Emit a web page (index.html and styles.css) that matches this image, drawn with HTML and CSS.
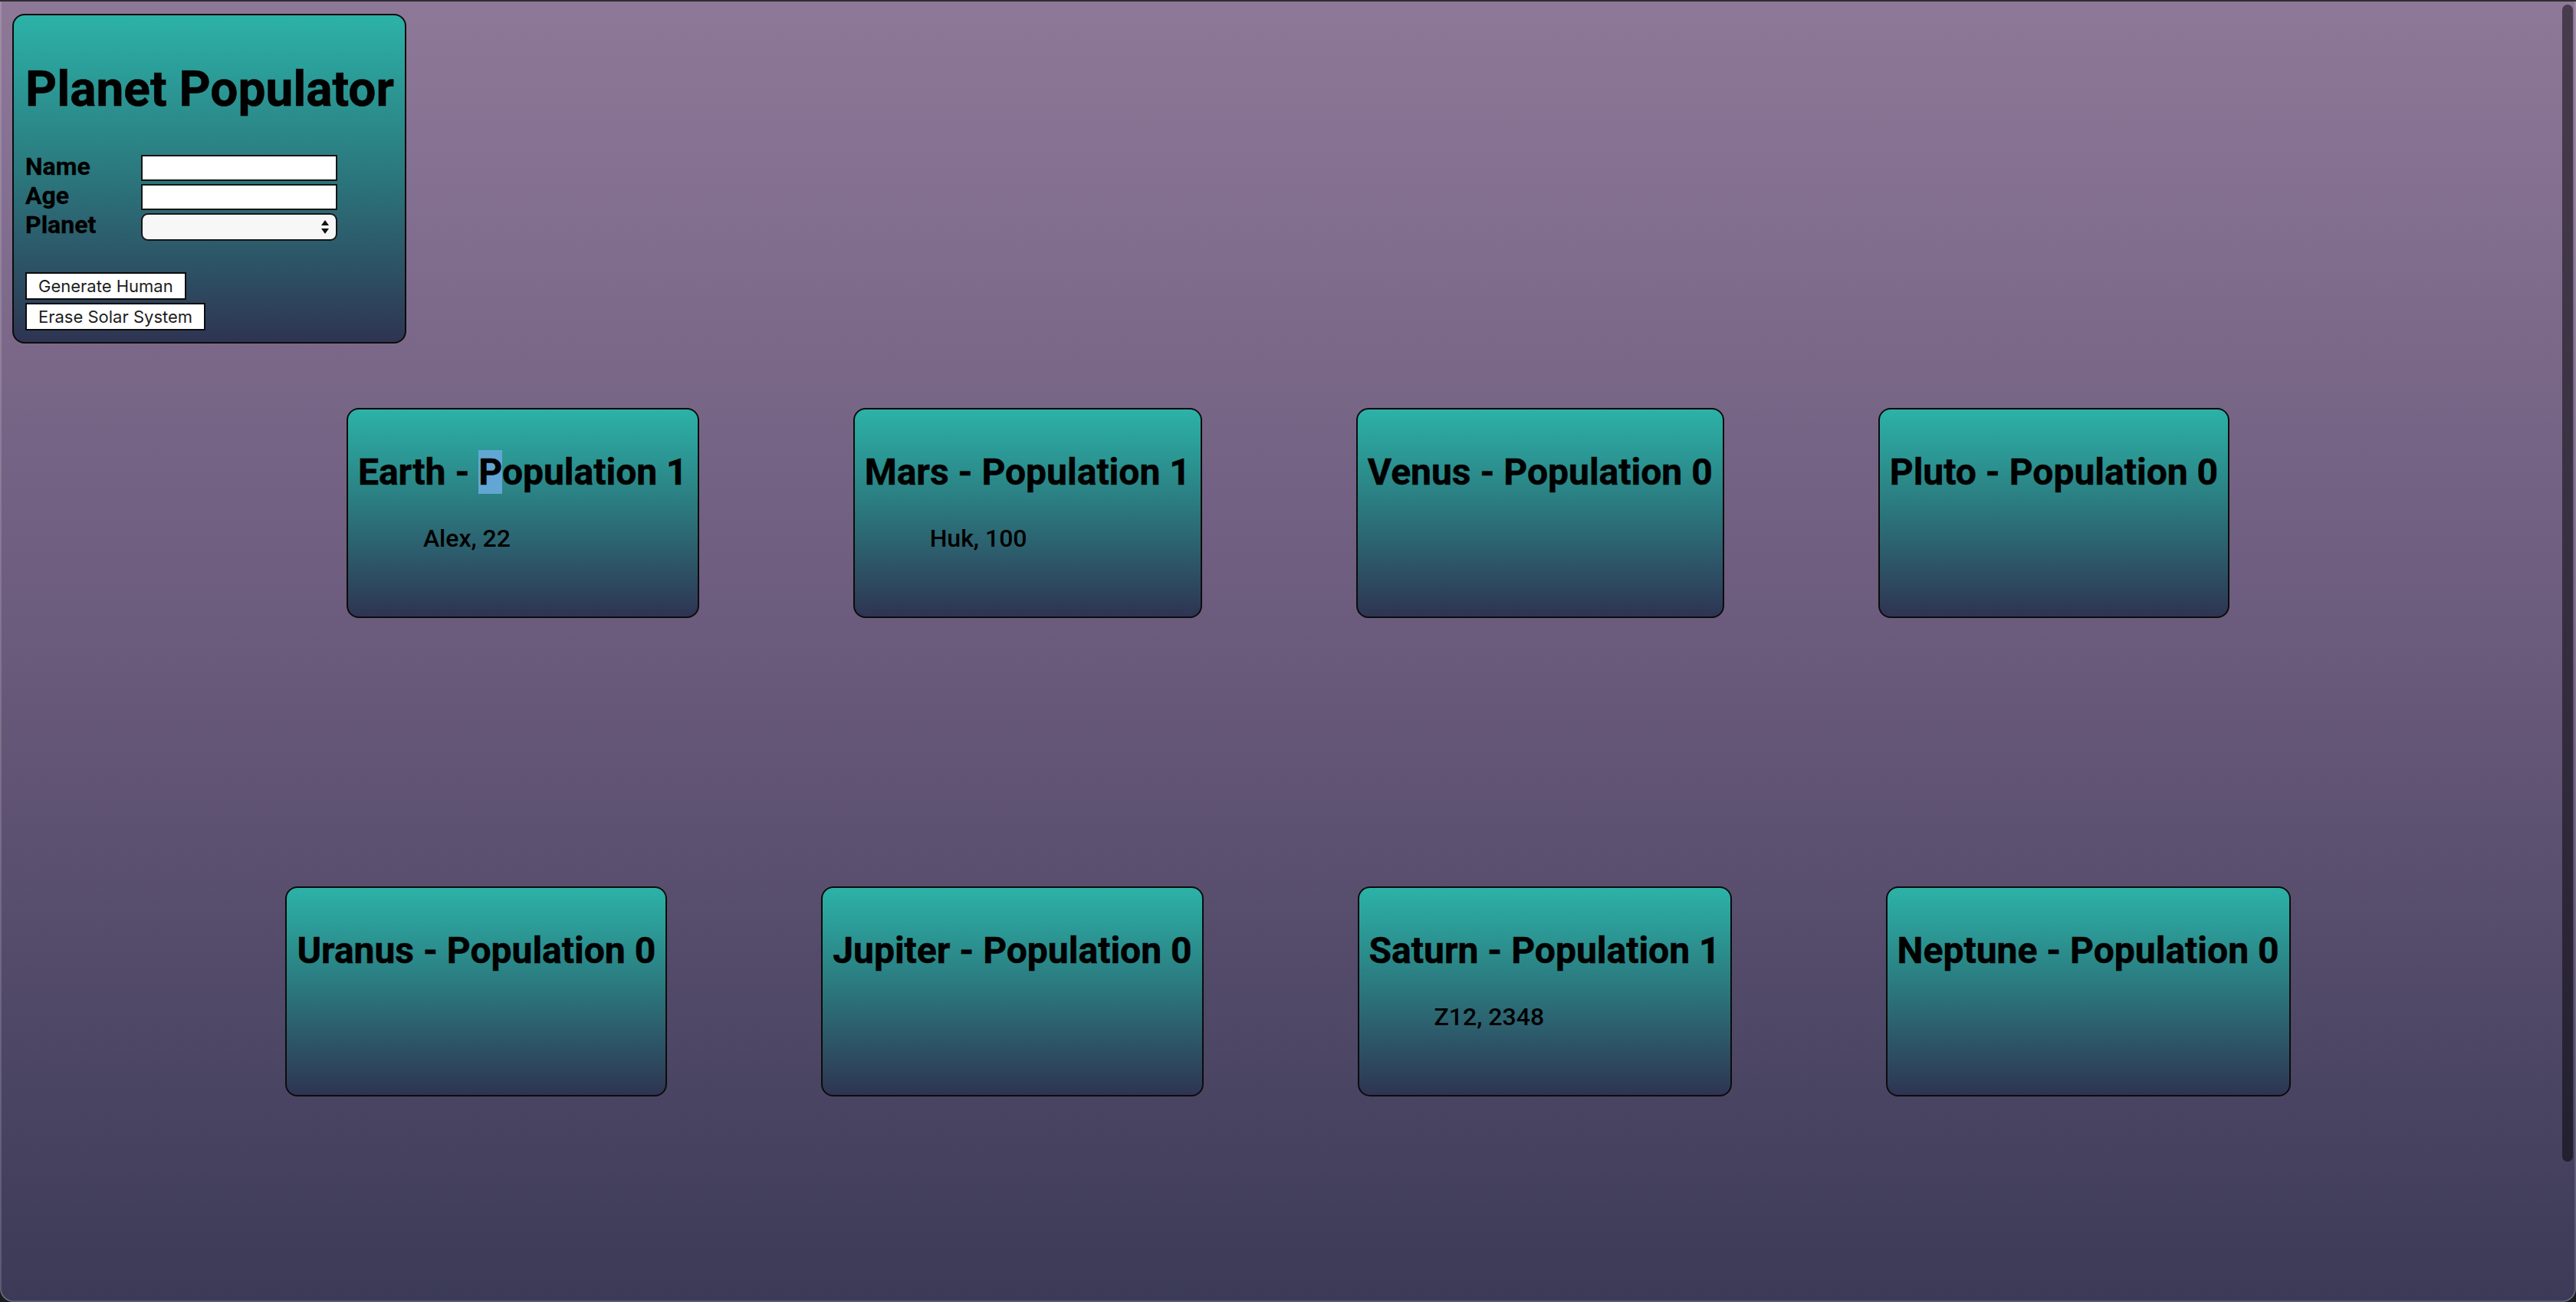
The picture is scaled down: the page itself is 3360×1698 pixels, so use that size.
FILE: index.html
```html
<!DOCTYPE html>
<html lang="en">
<head>
<meta charset="utf-8">
<title>Planet Populator</title>
<link rel="stylesheet" href="styles.css">
</head>
<body>
<div class="window">
  <div class="panel">
    <h1 class="panel-title">Planet Populator</h1>
    <form class="form">
      <div class="fields">
        <label class="field-label" for="name">Name</label>
        <input class="field-input" id="name" type="text">
        <label class="field-label" for="age">Age</label>
        <input class="field-input" id="age" type="text">
        <label class="field-label" for="planet">Planet</label>
        <div class="select-wrap">
          <select class="field-select" id="planet"><option></option></select>
          <svg class="select-arrows" width="12" height="20" viewBox="0 0 12 20"><path d="M6 1 L11 8 L1 8 Z" fill="#111"/><path d="M1 12 L11 12 L6 19 Z" fill="#111"/></svg>
        </div>
      </div>
      <div class="actions">
        <button class="btn" type="button">Generate Human</button>
        <button class="btn" type="button">Erase Solar System</button>
      </div>
    </form>
  </div>

  <div class="planets">
    <div class="row">
      <div class="card"><h2 class="card-title">Earth - <span class="sel">P</span>opulation 1</h2><ul class="residents"><li>Alex, 22</li></ul></div>
      <div class="card"><h2 class="card-title">Mars - Population 1</h2><ul class="residents"><li>Huk, 100</li></ul></div>
      <div class="card"><h2 class="card-title">Venus - Population 0</h2></div>
      <div class="card"><h2 class="card-title">Pluto - Population 0</h2></div>
    </div>
    <div class="row">
      <div class="card"><h2 class="card-title">Uranus - Population 0</h2></div>
      <div class="card"><h2 class="card-title">Jupiter - Population 0</h2></div>
      <div class="card"><h2 class="card-title">Saturn - Population 1</h2><ul class="residents"><li>Z12, 2348</li></ul></div>
      <div class="card"><h2 class="card-title">Neptune - Population 0</h2></div>
    </div>
  </div>
  <div class="scrollbar"></div>
</div>
</body>
</html>
```

FILE: styles.css
```css
html {
  background: #1c1b1f;
}
body {
  margin: 0;
  font-family: Roboto, "Liberation Sans", sans-serif;
  color: #000;
}
.window {
  position: relative;
  height: 1698px;
  box-sizing: border-box;
  overflow: hidden;
  border-top: 2px solid #2e2c30;
  border-radius: 0 0 18px 18px;
  background: linear-gradient(to bottom, #8e7898 0%, #6a5a7c 50%, #3b3a57 100%);
  box-shadow: inset 2px 0 0 rgba(255,255,255,0.16), inset -2px 0 0 rgba(255,255,255,0.16), inset 0 -2px 0 rgba(255,255,255,0.16);
}
.panel {
  width: fit-content;
  margin: 16px 0 0 16px;
  padding: 16px 14px 15px 15px;
  border: 2px solid #0c0c0c;
  border-radius: 16px;
  background: linear-gradient(to bottom, #2cb2a8 0%, #2b7c80 45%, #2e3452 100%);
}
.panel-title {
  margin: 43px 0 48px;
  font-size: 64px;
  font-weight: 700;
  line-height: 75px;
  white-space: nowrap;
  -webkit-text-stroke: 0.6px #000;
}
.fields {
  display: grid;
  grid-template-columns: 151px 256px;
  grid-template-rows: 34px 34px 36px;
  row-gap: 4px;
}
.field-label {
  align-self: start;
  font-size: 32px;
  font-weight: 700;
  line-height: 30px;
  -webkit-text-stroke: 0.3px #000;
}
.field-input {
  box-sizing: border-box;
  width: 256px;
  height: 34px;
  margin: 0;
  padding: 0 6px;
  border: 2px solid #151515;
  background: #fff;
  outline: none;
}
.select-wrap {
  position: relative;
  width: 256px;
  height: 36px;
}
.field-select {
  appearance: none;
  -webkit-appearance: none;
  box-sizing: border-box;
  width: 256px;
  height: 36px;
  margin: 0;
  border: 2px solid #151515;
  border-radius: 9px;
  background: #f7f7f7;
}
.select-arrows {
  position: absolute;
  right: 10px;
  top: 8px;
}
.actions {
  display: flex;
  flex-direction: column;
  align-items: flex-start;
  gap: 4px;
  margin-top: 41px;
}
.btn {
  box-sizing: border-box;
  height: 36px;
  margin: 0;
  padding: 0 15px;
  border: 2px solid #0c0c0c;
  border-radius: 0;
  background: #fff;
  color: #1e1e1e;
  font-family: Inter, Roboto, sans-serif;
  font-size: 22px;
  line-height: 32px;
}
.planets {
  margin-top: 84px;
  display: flex;
  flex-direction: column;
  row-gap: 350px;
}
.row {
  display: flex;
  justify-content: center;
  column-gap: 201px;
}
.card {
  box-sizing: border-box;
  height: 274px;
  padding: 14px 13px 0;
  border: 2px solid #0c0c0c;
  border-radius: 16px;
  background: linear-gradient(to bottom, #2cb2a8 0%, #2b7c80 45%, #2e3452 100%);
}
.card-title {
  margin: 40px 0;
  font-size: 48px;
  font-weight: 700;
  line-height: 56px;
  white-space: nowrap;
  -webkit-text-stroke: 0.5px #000;
}
.sel {
  background: #62a7d3;
}
.residents {
  margin: 32px 0;
  padding-left: 85px;
  list-style: none;
  font-size: 32px;
  font-weight: 500;
  line-height: 37.5px;
}
.scrollbar {
  position: absolute;
  top: 4px;
  right: 4px;
  width: 14px;
  height: 1509px;
  border-radius: 7px;
  background: rgba(0,0,0,0.5);
}
```
